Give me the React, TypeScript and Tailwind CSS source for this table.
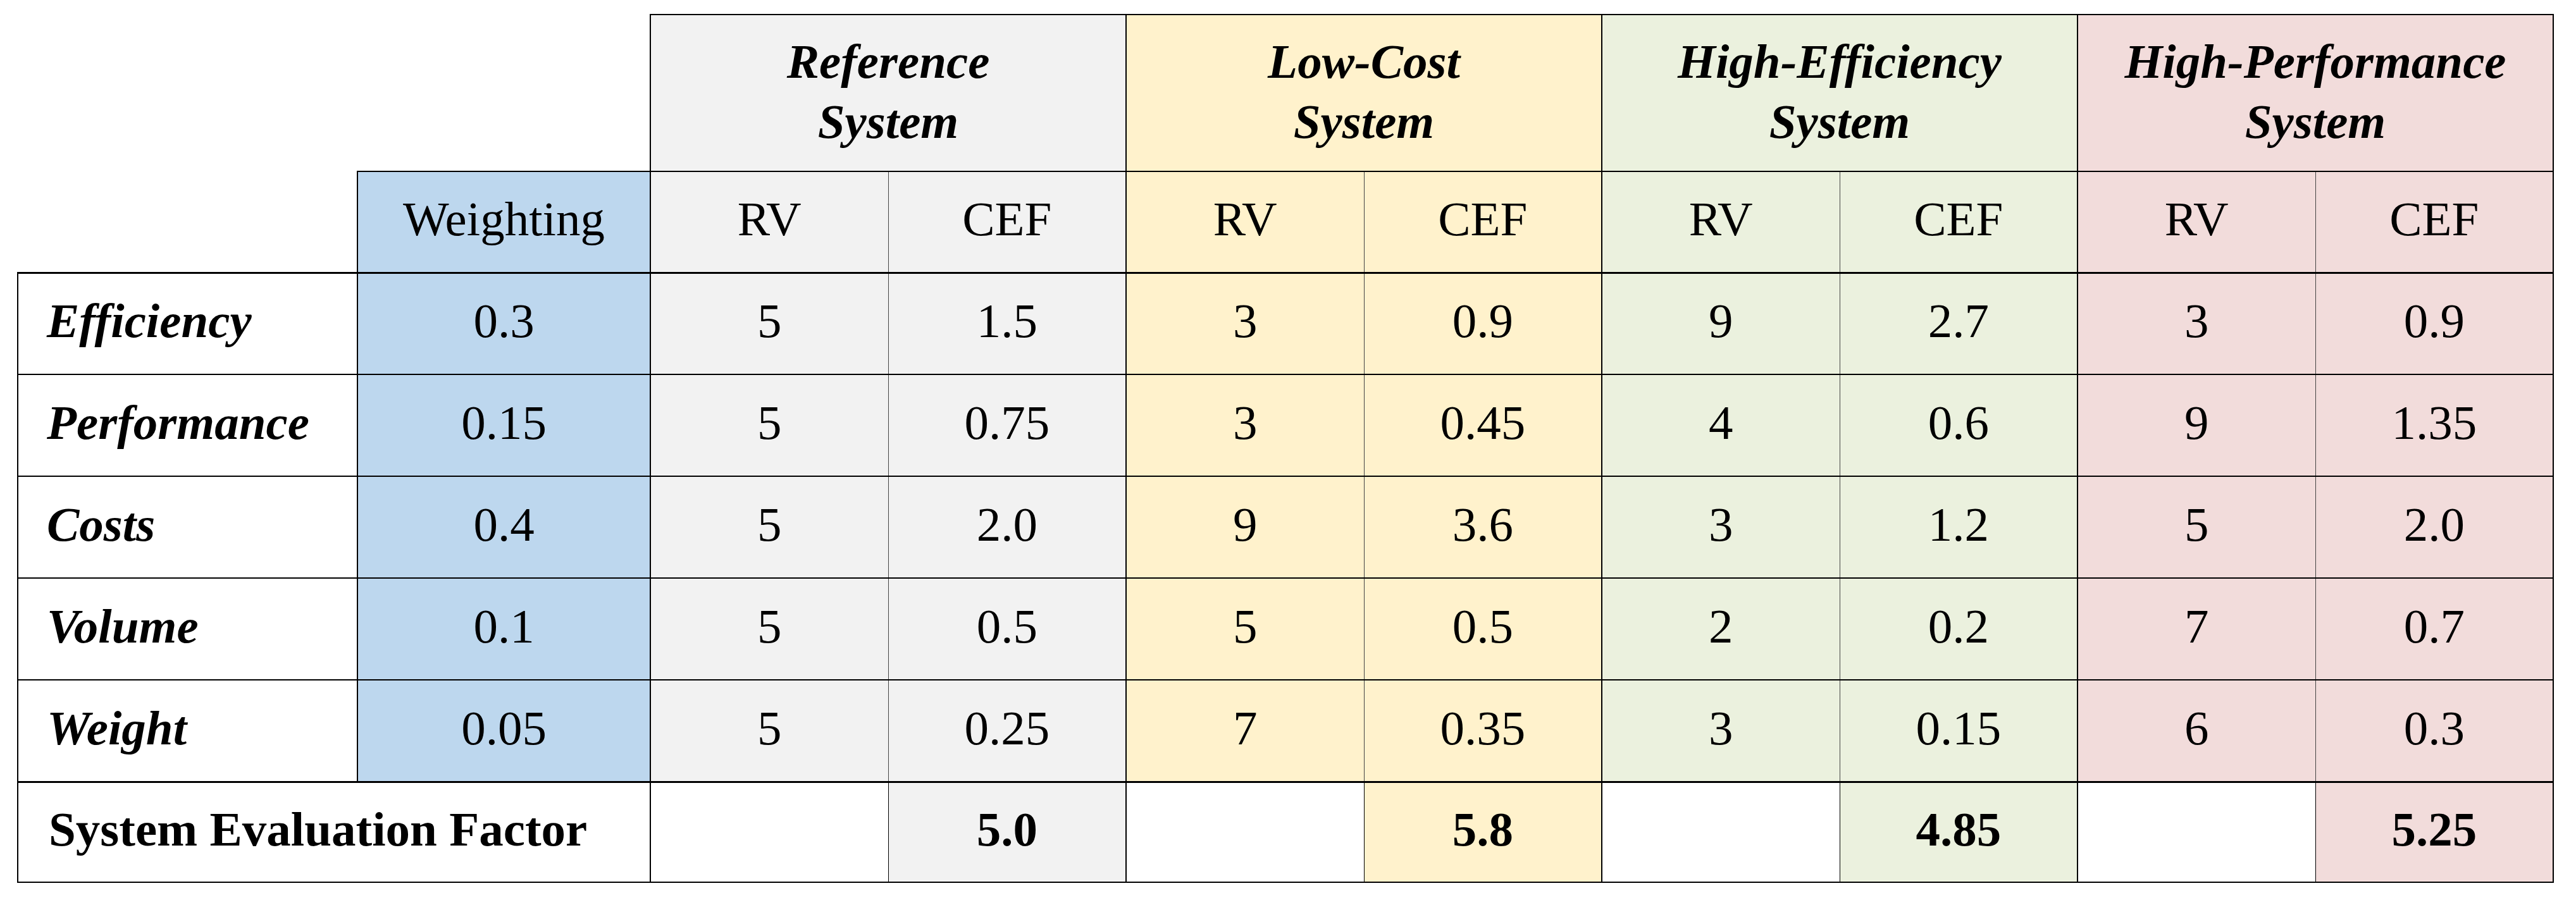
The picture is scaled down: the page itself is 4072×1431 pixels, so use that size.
import React from "react";

const systems = [
  { title: ["Reference", "System"], bg: "bg-[#f2f2f2]", total: "5.0" },
  { title: ["Low-Cost", "System"], bg: "bg-[#fff2cc]", total: "5.8" },
  { title: ["High-Efficiency", "System"], bg: "bg-[#ebf1de]", total: "4.85" },
  { title: ["High-Performance", "System"], bg: "bg-[#f2dcdb]", total: "5.25" },
];

const criteria = [
  { name: "Efficiency", weight: "0.3", values: [["5", "1.5"], ["3", "0.9"], ["9", "2.7"], ["3", "0.9"]] },
  { name: "Performance", weight: "0.15", values: [["5", "0.75"], ["3", "0.45"], ["4", "0.6"], ["9", "1.35"]] },
  { name: "Costs", weight: "0.4", values: [["5", "2.0"], ["9", "3.6"], ["3", "1.2"], ["5", "2.0"]] },
  { name: "Volume", weight: "0.1", values: [["5", "0.5"], ["5", "0.5"], ["2", "0.2"], ["7", "0.7"]] },
  { name: "Weight", weight: "0.05", values: [["5", "0.25"], ["7", "0.35"], ["3", "0.15"], ["6", "0.3"]] },
];

const weightBg = "bg-[#bdd7ee]";

export default function App() {
  return (
    <div className="min-h-screen bg-white pl-[27px] pt-[22px] text-black">
      <table className="table-fixed border-collapse font-['Liberation_Serif',serif] text-[77px] leading-[1.23]">
        <colgroup>
          <col className="w-[537px]" />
          <col className="w-[463px]" />
          {systems.map((s) => (
            <React.Fragment key={s.title[0]}>
              <col className="w-[376px]" />
              <col className="w-[376px]" />
            </React.Fragment>
          ))}
        </colgroup>
        <thead>
          <tr className="h-[248px]">
            <th colSpan={2} />
            {systems.map((s) => (
              <th
                key={s.title[0]}
                colSpan={2}
                className={`${s.bg} border-2 border-black pb-[4px] text-center align-middle font-bold italic`}
              >
                {s.title[0]}
                <br />
                {s.title[1]}
              </th>
            ))}
          </tr>
          <tr className="h-[160px]">
            <th />
            <th className={`${weightBg} border-2 border-b-[3px] border-black pb-[8px] text-center align-middle font-normal`}>
              Weighting
            </th>
            {systems.map((s) => (
              <React.Fragment key={s.title[0]}>
                <th className={`${s.bg} border-t-2 border-b-[3px] border-l-2 border-r border-black border-r-[#444] pb-[8px] text-center align-middle font-normal`}>
                  RV
                </th>
                <th className={`${s.bg} border-t-2 border-b-[3px] border-r-2 border-l border-black border-l-[#444] pb-[8px] text-center align-middle font-normal`}>
                  CEF
                </th>
              </React.Fragment>
            ))}
          </tr>
        </thead>
        <tbody>
          {criteria.map((c, i) => {
            const top = i === 0 ? "border-t-[3px]" : "border-t-2";
            return (
              <tr key={c.name} className="h-[161px]">
                <td className={`${top} border-b-2 border-x-2 border-black pb-[8px] pl-[45px] text-left align-middle font-bold italic`}>
                  {c.name}
                </td>
                <td className={`${weightBg} ${top} border-b-2 border-x-2 border-black pb-[8px] text-center align-middle`}>
                  {c.weight}
                </td>
                {systems.map((s, j) => (
                  <React.Fragment key={s.title[0]}>
                    <td className={`${s.bg} ${top} border-b-2 border-l-2 border-r border-black border-r-[#444] pb-[8px] text-center align-middle`}>
                      {c.values[j][0]}
                    </td>
                    <td className={`${s.bg} ${top} border-b-2 border-r-2 border-l border-black border-l-[#444] pb-[8px] text-center align-middle`}>
                      {c.values[j][1]}
                    </td>
                  </React.Fragment>
                ))}
              </tr>
            );
          })}
          <tr className="h-[159px]">
            <td colSpan={2} className="border-t-[3px] border-b-2 border-x-2 border-black pb-[8px] pl-[48px] text-left align-middle font-bold">
              System Evaluation Factor
            </td>
            {systems.map((s) => (
              <React.Fragment key={s.title[0]}>
                <td className="border-t-[3px] border-b-2 border-l-2 border-r border-black bg-white" />
                <td className={`${s.bg} border-t-[3px] border-b-2 border-r-2 border-l border-black pb-[8px] text-center align-middle font-bold`}>
                  {s.total}
                </td>
              </React.Fragment>
            ))}
          </tr>
        </tbody>
      </table>
    </div>
  );
}
